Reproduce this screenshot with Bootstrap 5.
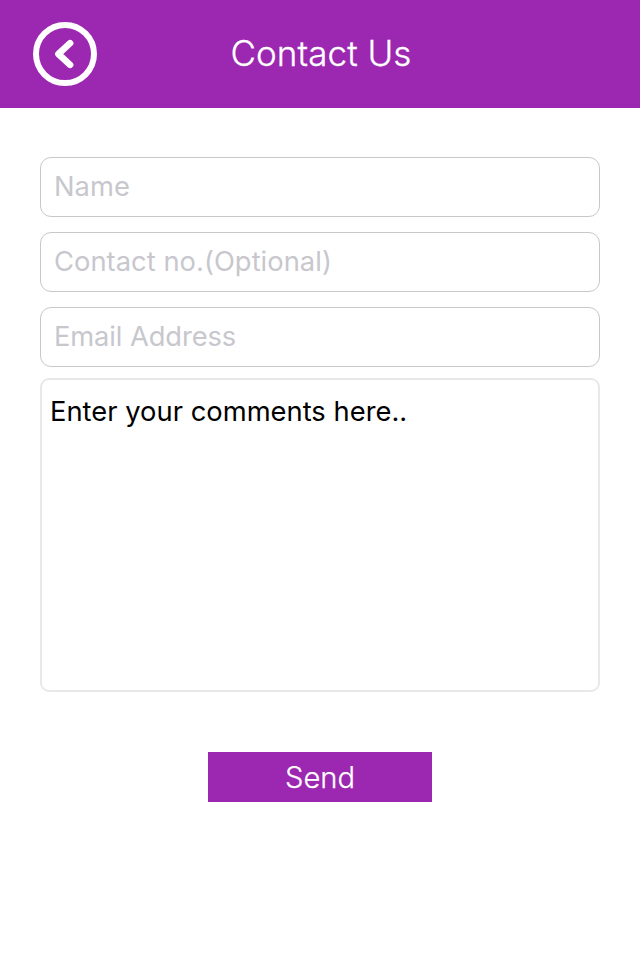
<!DOCTYPE html>
<html lang="en">
<head>
<meta charset="utf-8">
<meta name="viewport" content="width=device-width, initial-scale=1">
<title>Contact Us</title>
<link href="https://cdn.jsdelivr.net/npm/bootstrap@5.3.0/dist/css/bootstrap.min.css" rel="stylesheet">
<style>
  :root { --brand: #9c27b0; }
  body { font-family: Inter, "Liberation Sans", sans-serif; }
  .topbar { height: 108px; background: var(--brand); padding: 0 33px; }
  .topbar-side { width: 64px; height: 64px; }
  .topbar-title { font-size: 35px; line-height: 44px; font-weight: 300; letter-spacing: .05px; padding: 0 0 2px 2px; -webkit-text-stroke: .3px #fff; }
  .contact-form { padding: 49px 40px 0; }
  .fields { gap: 15px; }
  .field { height: 60px; padding: 0 13px 2px; font-size: 27.3px; line-height: 34px; letter-spacing: .05px; border: 1px solid #c8c8cb; border-radius: 11px; }
  .field::placeholder { color: #c7c7cd; opacity: 1; }
  .field-email { letter-spacing: -.1px; }
  .comments { height: 314px; margin-top: 11px; padding: 15px 8px; font-size: 27.3px; line-height: 34px; letter-spacing: .03px; color: #000; border: 2px solid #e8e8e8; border-radius: 9px; resize: none; }
  .send { width: 224px; height: 50px; margin-top: 60px; padding: 2px 0 0; background: var(--brand); font-size: 29.2px; line-height: 36px; font-weight: 300; -webkit-text-stroke: .25px #fff; }
  .send:hover { background: var(--brand); }
</style>
<script src="https://cdn.jsdelivr.net/npm/bootstrap@5.3.0/dist/js/bootstrap.bundle.min.js"></script>
</head>
<body class="bg-white">
<header class="topbar d-flex align-items-center justify-content-between text-white">
  <a href="#" class="topbar-side d-block text-white" aria-label="Back">
    <svg class="d-block" width="64" height="64" viewBox="0 0 64 64" fill="none" stroke="currentColor" stroke-width="6">
      <circle cx="32" cy="32" r="29"/>
      <path d="M37.1 21.2 25.4 32 37.1 42.8" stroke-width="6.6" stroke-linecap="round" stroke-linejoin="round"/>
    </svg>
  </a>
  <h1 class="topbar-title m-0">Contact Us</h1>
  <span class="topbar-side"></span>
</header>
<main>
  <form class="contact-form d-flex flex-column">
    <div class="fields d-flex flex-column">
      <input type="text" class="form-control field" placeholder="Name" aria-label="Name">
      <input type="tel" class="form-control field" placeholder="Contact no.(Optional)" aria-label="Contact number">
      <input type="email" class="form-control field field-email" placeholder="Email Address" aria-label="Email address">
    </div>
    <textarea class="form-control comments" aria-label="Comments" spellcheck="false">Enter your comments here..</textarea>
    <button type="button" class="btn send rounded-0 border-0 text-white align-self-center">Send</button>
  </form>
</main>
</body>
</html>
